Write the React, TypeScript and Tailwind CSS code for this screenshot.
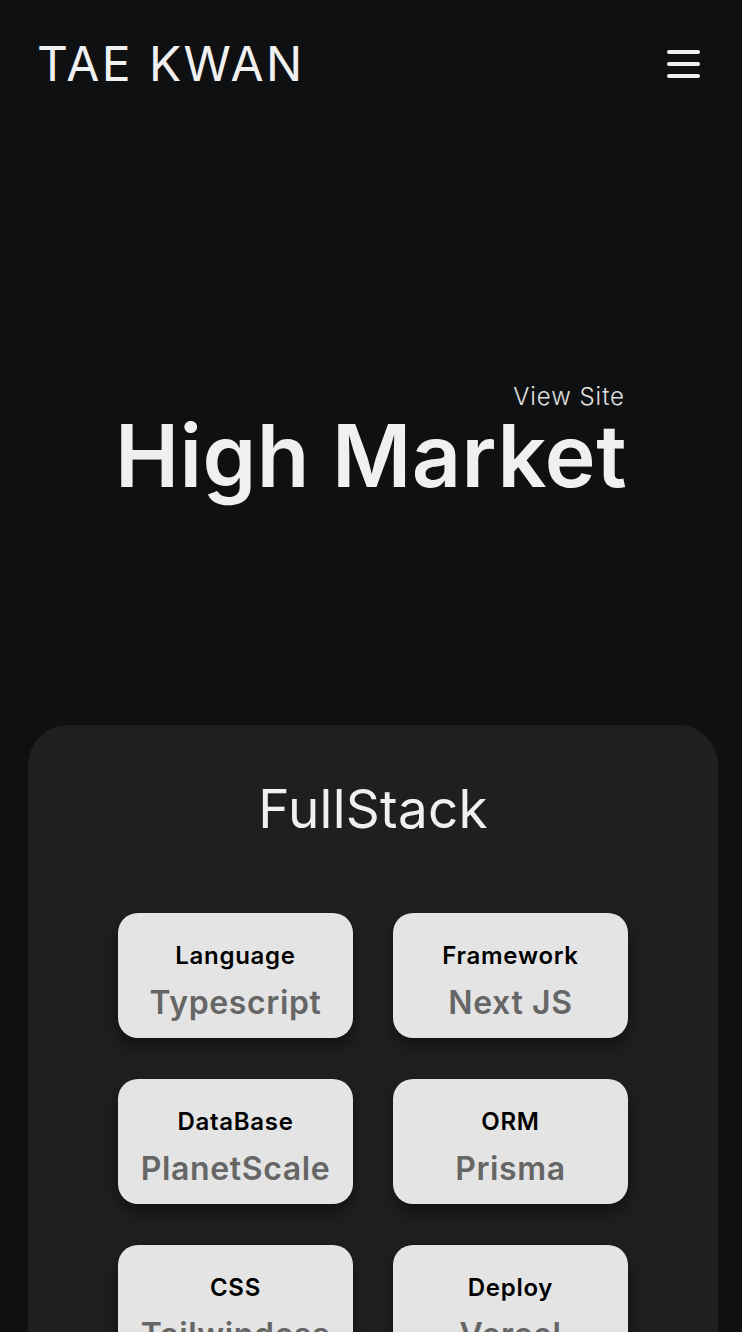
const stack = [
  { label: "Language", value: "Typescript" },
  { label: "Framework", value: "Next JS" },
  { label: "DataBase", value: "PlanetScale" },
  { label: "ORM", value: "Prisma" },
  { label: "CSS", value: "Tailwindcss" },
  { label: "Deploy", value: "Vercel" },
];

export default function App() {
  return (
    <div className="min-h-screen bg-[#0f1012] text-[#f0f0f0] font-['Inter',sans-serif] overflow-hidden">
      {/* Header */}
      <header className="flex items-center justify-between pl-[37px] pr-[42px] pt-[40px]">
        <h1 className="text-[48px] leading-none tracking-[0.05em] font-normal">TAE KWAN</h1>
        <button className="flex flex-col gap-[8px]">
          <span className="block w-[33px] h-[4px] bg-[#f0f0f0] rounded-sm" />
          <span className="block w-[33px] h-[4px] bg-[#f0f0f0] rounded-sm" />
          <span className="block w-[33px] h-[4px] bg-[#f0f0f0] rounded-sm" />
        </button>
      </header>

      {/* Hero */}
      <section className="flex justify-center pt-[297px]">
        <div className="flex flex-col items-end">
          <a className="text-[24px] font-light text-[#e0e0e0] leading-none mr-[2px] tracking-[0.04em]">View Site</a>
          <h2 className="text-[86px] font-semibold leading-none mt-[4px] tracking-[0.005em]">High Market</h2>
        </div>
      </section>

      {/* Stack card */}
      <section className="ml-[28px] mr-[24px] mt-[226px] rounded-[40px] bg-[#1f1f1f] pt-[58px] pb-[60px]">
        <h3 className="text-center text-[53px] leading-none font-normal tracking-[0.005em]">FullStack</h3>
        <div className="grid grid-cols-[235px_235px] gap-x-[40px] gap-y-[41px] justify-center mt-[77px]">
          {stack.map((s) => (
            <div
              key={s.label}
              className="h-[125px] rounded-[20px] bg-[#e4e4e4] flex flex-col items-center pt-[31px] shadow-[0_8px_16px_rgba(0,0,0,0.45)]"
            >
              <span className="text-[24px] font-semibold text-black leading-none tracking-[0.03em]">{s.label}</span>
              <span className="text-[32px] font-semibold text-[#666666] leading-none mt-[19px] tracking-[0.02em]">{s.value}</span>
            </div>
          ))}
        </div>
      </section>
    </div>
  );
}
